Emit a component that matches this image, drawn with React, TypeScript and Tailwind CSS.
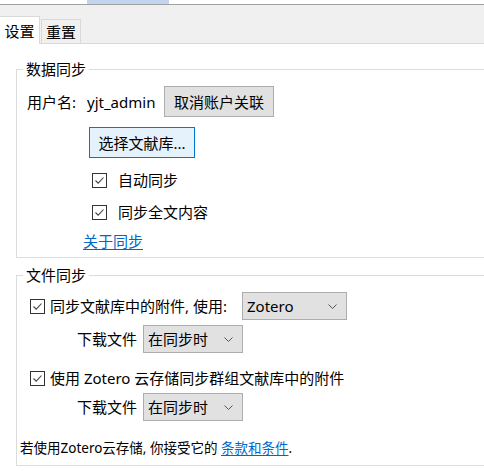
import React from 'react';

const Check: React.FC<{ label: string }> = ({ label }) => (
  <label className="flex items-center">
    <span className="w-[15px] h-[15px] border border-[#333] bg-white flex items-center justify-center shrink-0">
      <svg width="11" height="11" viewBox="0 0 11 11">
        <path d="M1.5 5.5 L4.2 8.2 L9.5 2.5" fill="none" stroke="#444" strokeWidth="1.1" />
      </svg>
    </span>
    {label && <span className="ml-[5px] whitespace-nowrap">{label}</span>}
  </label>
);

const Select: React.FC<{ value: string; width: string }> = ({ value, width }) => (
  <div className={`${width} h-[28px] bg-[#e1e1e1] border border-[#adadad] flex items-center pl-[4px] pr-[9px]`}>
    <span className="flex-1 whitespace-nowrap">{value}</span>
    <svg width="9" height="5" viewBox="0 0 9 5">
      <path d="M0.5 0.5 L4.5 4.5 L8.5 0.5" fill="none" stroke="#555" strokeWidth="1" />
    </svg>
  </div>
);

export default function App() {
  return (
    <div className="w-[484px] h-[471px] overflow-hidden bg-white text-[15px] text-black leading-[20px] font-['Noto_Sans','Noto_Sans_CJK_SC',sans-serif]">
      <div className="h-[4px] flex">
        <div className="w-[87px]" />
        <div className="w-[82px] bg-[#c3d5ee]" />
      </div>
      <div className="h-px bg-[#a0a0a0]" />
      <div className="h-[39px] bg-[#f0f0f0] border-b border-[#d9d9d9] flex items-end">
        <div className="w-[40px] h-[28px] bg-white border-t border-r border-[#d9d9d9] mb-[-1px] flex items-center justify-center">
          设置
        </div>
        <div className="w-[40px] h-[24px] ml-[1px] bg-[#f0f0f0] border-t border-l border-r border-[#d9d9d9] flex items-center justify-center">
          重置
        </div>
      </div>

      <fieldset className="ml-[16px] mr-[-10px] mt-[15px] border border-[#dcdcdc] pb-[6px]">
        <legend className="ml-[6px] px-[3px]">数据同步</legend>
        <div className="flex items-center h-[31px] mt-[7px] pl-[10px]">
          <span className="w-[60px]">用户名:</span>
          <span className="w-[77px]">yjt_admin</span>
          <button className="w-[110px] h-[31px] bg-[#e1e1e1] border border-[#adadad]">取消账户关联</button>
        </div>
        <button className="ml-[72px] mt-[10px] w-[106px] h-[31px] bg-[#e5f1fb] border border-[#0078d7] block">
          选择文献库...
        </button>
        <div className="ml-[75px] mt-[12px] h-[20px] flex items-center">
          <Check label="" />
          <span className="ml-[11px]">自动同步</span>
        </div>
        <div className="ml-[75px] mt-[12px] h-[20px] flex items-center">
          <Check label="" />
          <span className="ml-[11px]">同步全文内容</span>
        </div>
        <div className="ml-[66px] mt-[9px] h-[20px]">
          <a className="text-[#0066cc] underline underline-offset-2">关于同步</a>
        </div>
      </fieldset>

      <fieldset className="ml-[16px] mr-[-10px] mt-[7px] border border-[#dcdcdc] pb-[7px]">
        <legend className="ml-[6px] px-[3px]">文件同步</legend>
        <div className="flex items-center h-[28px] mt-[7px] pl-[13px]">
          <div className="w-[212px]">
            <Check label="同步文献库中的附件, 使用:" />
          </div>
          <Select value="Zotero" width="w-[105px]" />
        </div>
        <div className="flex items-center h-[28px] mt-[5px] pl-[60px]">
          <span className="w-[66px]">下载文件</span>
          <Select value="在同步时" width="w-[100px]" />
        </div>
        <div className="flex items-center h-[20px] mt-[15px] pl-[13px]">
          <Check label="使用 Zotero 云存储同步群组文献库中的附件" />
        </div>
        <div className="flex items-center h-[28px] mt-[5px] pl-[60px]">
          <span className="w-[66px]">下载文件</span>
          <Select value="在同步时" width="w-[100px]" />
        </div>
        <div className="h-[20px] mt-[17px] pl-[3px] text-[13.5px] whitespace-nowrap">
          若使用Zotero云存储, 你接受它的{' '}
          <a className="text-[#0066cc] underline underline-offset-2">条款和条件</a>.
        </div>
      </fieldset>
    </div>
  );
}
